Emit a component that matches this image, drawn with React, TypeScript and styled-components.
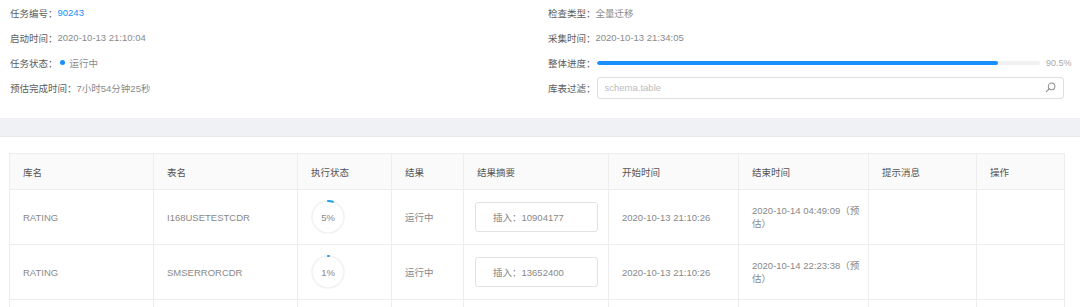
import React from "react";
import styled, { createGlobalStyle } from "styled-components";

const GlobalStyle = createGlobalStyle`
  html, body {
    margin: 0;
    padding: 0;
    background: #fff;
    overflow: hidden;
  }
  body {
    font-family: "Liberation Sans", "Noto Sans CJK SC", sans-serif;
    font-size: 9.5px;
    color: #666;
  }
`;

type Task = {
  db: string;
  table: string;
  percent: number;
  result: string;
  summary: string;
  start: string;
  end: string[];
};

const tasks: Task[] = [
  {
    db: "RATING",
    table: "I168USETESTCDR",
    percent: 5,
    result: "运行中",
    summary: "插入：10904177",
    start: "2020-10-13 21:10:26",
    end: ["2020-10-14 04:49:09（预", "估）"],
  },
  {
    db: "RATING",
    table: "SMSERRORCDR",
    percent: 1,
    result: "运行中",
    summary: "插入：13652400",
    start: "2020-10-13 21:10:26",
    end: ["2020-10-14 22:23:38（预", "估）"],
  },
  {
    db: "",
    table: "",
    percent: -1,
    result: "",
    summary: "",
    start: "",
    end: [],
  },
];

const columns = [
  { title: "库名", width: 144 },
  { title: "表名", width: 144 },
  { title: "执行状态", width: 94 },
  { title: "结果", width: 72 },
  { title: "结果摘要", width: 145 },
  { title: "开始时间", width: 130 },
  { title: "结束时间", width: 130 },
  { title: "提示消息", width: 108 },
  { title: "操作", width: 88 },
];

function CircleProgress({ percent }: { percent: number }) {
  const r = 16;
  const c = 2 * Math.PI * r;
  return (
    <Circle>
      <svg width="34" height="34" viewBox="0 0 34 34">
        <circle cx="17" cy="17" r={r} fill="none" stroke="#f2f2f2" strokeWidth="1.6" />
        <circle
          cx="17"
          cy="17"
          r={r}
          fill="none"
          stroke="#1aa0f5"
          strokeWidth="2"
          strokeLinecap="round"
          strokeDasharray={`${(percent / 100) * c} ${c}`}
          transform="rotate(-90 17 17)"
        />
      </svg>
      <CircleText>{percent}%</CircleText>
    </Circle>
  );
}

function SearchIcon() {
  return (
    <svg width="11" height="11" viewBox="0 0 12 12" fill="none" stroke="#8c8c8c" strokeWidth="1.1">
      <circle cx="7.2" cy="4.8" r="3.6" />
      <line x1="4.6" y1="7.4" x2="1.4" y2="10.6" strokeLinecap="round" />
    </svg>
  );
}

export default function App() {
  return (
    <>
      <GlobalStyle />
      <Page>
        <InfoPanel>
          <InfoColumn>
            <InfoRow>
              <Label>任务编号：</Label>
              <LinkValue>90243</LinkValue>
            </InfoRow>
            <InfoRow>
              <Label>启动时间：</Label>
              <Value>2020-10-13 21:10:04</Value>
            </InfoRow>
            <InfoRow>
              <Label>任务状态：</Label>
              <StatusDot />
              <Value>运行中</Value>
            </InfoRow>
            <InfoRow>
              <Label>预估完成时间：</Label>
              <Value>7小时54分钟25秒</Value>
            </InfoRow>
          </InfoColumn>
          <InfoColumn>
            <InfoRow>
              <Label>检查类型：</Label>
              <Value>全量迁移</Value>
            </InfoRow>
            <InfoRow>
              <Label>采集时间：</Label>
              <Value>2020-10-13 21:34:05</Value>
            </InfoRow>
            <InfoRow>
              <Label>整体进度：</Label>
              <ProgressTrack>
                <ProgressFill style={{ width: "90.5%" }} />
              </ProgressTrack>
              <ProgressText>90.5%</ProgressText>
            </InfoRow>
            <InfoRow>
              <Label>库表过滤：</Label>
              <SearchBox>
                <SearchInput placeholder="schema.table" />
                <SearchIcon />
              </SearchBox>
            </InfoRow>
          </InfoColumn>
        </InfoPanel>
        <Divider />
        <TableSection>
          <Table>
            <colgroup>
              {columns.map((col) => (
                <col key={col.title} style={{ width: col.width }} />
              ))}
            </colgroup>
            <thead>
              <tr>
                {columns.map((col) => (
                  <Th key={col.title}>{col.title}</Th>
                ))}
              </tr>
            </thead>
            <tbody>
              {tasks.map((t, i) => (
                <tr key={i}>
                  <Td>{t.db}</Td>
                  <Td>{t.table}</Td>
                  <Td>{t.percent >= 0 && <CircleProgress percent={t.percent} />}</Td>
                  <Td>{t.result}</Td>
                  <Td>{t.summary && <SummaryBox>{t.summary}</SummaryBox>}</Td>
                  <Td>{t.start}</Td>
                  <Td>
                    {t.end.map((line) => (
                      <Line key={line}>{line}</Line>
                    ))}
                  </Td>
                  <Td />
                  <Td />
                </tr>
              ))}
            </tbody>
          </Table>
        </TableSection>
      </Page>
    </>
  );
}

const Page = styled.div`
  width: 1080px;
  height: 307px;
  overflow: hidden;
`;

const InfoPanel = styled.div`
  display: grid;
  grid-template-columns: 538px 1fr;
  padding: 0 16px 18px 10px;
  height: 118px;
  box-sizing: border-box;
`;

const InfoColumn = styled.div`
  display: flex;
  flex-direction: column;
`;

const InfoRow = styled.div`
  height: 25px;
  display: flex;
  align-items: center;
`;

const Label = styled.span`
  color: #5c5c5c;
  white-space: nowrap;
`;

const Value = styled.span`
  color: #8a8a8a;
`;

const LinkValue = styled.span`
  color: #1890ff;
`;

const StatusDot = styled.span`
  width: 5px;
  height: 5px;
  border-radius: 50%;
  background: #1890ff;
  margin: 0 5px 0 2px;
`;

const ProgressTrack = styled.div`
  flex: 1;
  height: 4px;
  margin-left: 1px;
  border-radius: 2px;
  background: #f1f1f1;
  overflow: hidden;
`;

const ProgressFill = styled.div`
  height: 100%;
  border-radius: 2px;
  background: #1890ff;
`;

const ProgressText = styled.span`
  width: 24px;
  margin-left: 6px;
  margin-right: -6px;
  color: #aaa;
  font-size: 9px;
`;

const SearchBox = styled.div`
  flex: 1;
  height: 22px;
  margin-left: 1px;
  box-sizing: border-box;
  border: 1px solid #dedede;
  border-radius: 3px;
  display: flex;
  align-items: center;
  padding: 0 7px 0 7px;
`;

const SearchInput = styled.input`
  flex: 1;
  border: none;
  outline: none;
  padding: 0;
  font-family: inherit;
  font-size: 9.5px;
  color: #666;
  background: transparent;
  &::placeholder {
    color: #bbb;
  }
`;

const Divider = styled.div`
  height: 18px;
  background: #f0f1f4;
  border-bottom: 1px solid #e9eaee;
`;

const TableSection = styled.div`
  padding: 16px 16px 0 9px;
`;

const Table = styled.table`
  width: 1055px;
  table-layout: fixed;
  border-collapse: collapse;
`;

const Th = styled.th`
  height: 36px;
  padding: 0 13px;
  box-sizing: border-box;
  background: #fafafa;
  border: 1px solid #ededed;
  text-align: left;
  font-weight: normal;
  color: #555;
`;

const Td = styled.td`
  height: 55px;
  padding: 0 13px;
  box-sizing: border-box;
  border: 1px solid #ededed;
  color: #888;
  line-height: 13px;
  vertical-align: middle;
`;

const Line = styled.div`
  white-space: nowrap;
`;

const Circle = styled.div`
  position: relative;
  width: 34px;
  height: 34px;
`;

const CircleText = styled.span`
  position: absolute;
  inset: 0;
  display: flex;
  align-items: center;
  justify-content: center;
  color: #888;
`;

const SummaryBox = styled.div`
  width: 123px;
  height: 30px;
  margin-left: -2px;
  box-sizing: border-box;
  border: 1px solid #e2e2e2;
  border-radius: 3px;
  display: flex;
  align-items: center;
  padding-left: 17px;
  color: #888;
`;
